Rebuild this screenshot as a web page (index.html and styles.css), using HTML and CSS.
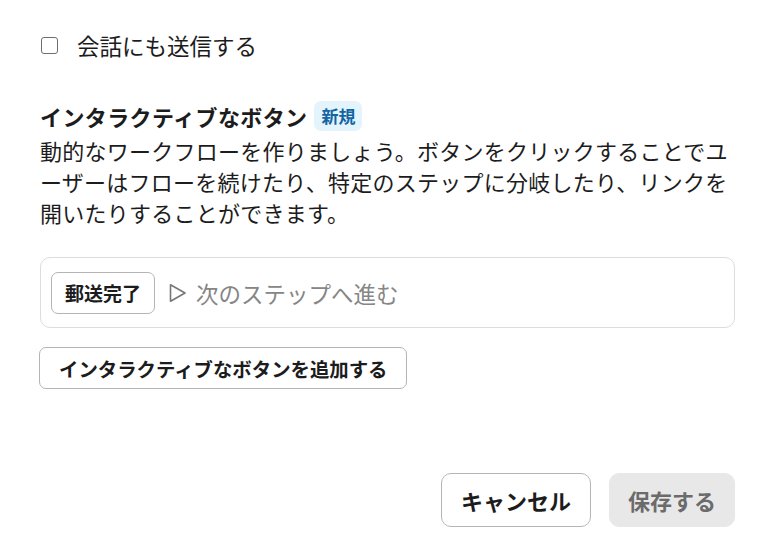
FILE: index.html
```html
<!DOCTYPE html>
<html lang="ja">
<head>
<meta charset="utf-8">
<link rel="stylesheet" href="styles.css">
</head>
<body>
<div class="page">
  <label class="check-row">
    <span class="checkbox"></span>
    <span class="check-label">会話にも送信する</span>
  </label>

  <section class="section">
    <div class="title-row">
      <h2 class="title">インタラクティブなボタン</h2>
      <span class="badge">新規</span>
    </div>
    <p class="desc">動的なワークフローを作りましょう。ボタンをクリックすることでユーザーはフローを続けたり、特定のステップに分岐したり、リンクを開いたりすることができます。</p>
  </section>

  <div class="preview">
    <span class="chip">郵送完了</span>
    <svg class="play" width="18" height="20" viewBox="0 0 18 20"><path d="M1.5 1.8 L16 10 L1.5 18.2 Z" fill="none" stroke="#777" stroke-width="1.6" stroke-linejoin="round"/></svg>
    <span class="next">次のステップへ進む</span>
  </div>

  <div class="add-row">
    <button class="add-btn">インタラクティブなボタンを追加する</button>
  </div>

  <div class="footer">
    <button class="btn cancel">キャンセル</button>
    <button class="btn save">保存する</button>
  </div>
</div>
</body>
</html>
```

FILE: styles.css
```css
* { box-sizing: border-box; }
html, body { margin: 0; padding: 0; background: #fff; }
body {
  font-family: "Noto Sans CJK JP", "Noto Sans", sans-serif;
  color: #1d1c1d;
  width: 775px;
  height: 534px;
  overflow: hidden;
}
.page {
  padding: 29px 40px 0 40px;
  display: flex;
  flex-direction: column;
}
.check-row {
  display: flex;
  align-items: center;
  gap: 19px;
  height: 32px;
}
.checkbox {
  width: 17px;
  height: 17px;
  border: 1.5px solid #6e6e6e;
  border-radius: 3px;
  margin-left: 1px;
  flex: none;
}
.check-label {
  font-size: 22.5px;
  line-height: 32px;
  margin-top: -1px;
}
.section { margin-top: 39px; }
.title-row {
  display: flex;
  align-items: center;
  gap: 7px;
  height: 32px;
}
.title {
  margin: 0;
  font-size: 22px;
  font-weight: 700;
  line-height: 32px;
  letter-spacing: 0.4px;
}
.badge {
  background: #e3f4fc;
  color: #1264a3;
  font-size: 17px;
  font-weight: 700;
  line-height: 30px;
  padding: 0 7px;
  border-radius: 7px;
}
.desc {
  margin: 0;
  font-size: 22px;
  letter-spacing: 0.25px;
  line-height: 31px;
  margin-top: 3px;
}
.preview {
  margin-top: 29px;
  height: 71px;
  border: 1px solid #dddddd;
  border-radius: 10px;
  display: flex;
  align-items: center;
  padding: 0 10px;
}
.chip {
  border: 1px solid #b5b5b5;
  border-radius: 7px;
  height: 42px;
  padding: 0 13px;
  display: flex;
  align-items: center;
  font-size: 19px;
  font-weight: 700;
}
.play { margin-left: 14px; flex: none; }
.next {
  margin-left: 9px;
  font-size: 22.5px;
  color: #868686;
}
.add-row { margin-top: 19px; display: flex; }
.add-btn {
  font-family: inherit;
  background: #fff;
  color: #1d1c1d;
  border: 1px solid #b5b5b5;
  border-radius: 7px;
  height: 42px;
  padding: 0 19px;
  font-size: 19.4px;
  font-weight: 700;
  margin-left: -1px;
}
.footer {
  margin-top: 84px;
  display: flex;
  justify-content: flex-end;
  gap: 18px;
}
.btn {
  font-family: inherit;
  height: 54px;
  border-radius: 10px;
  font-size: 22px;
  font-weight: 700;
}
.cancel {
  padding: 0 19px;
  background: #fff;
  border: 1px solid #b5b5b5;
  color: #1d1c1d;
}
.save {
  padding: 0 18px;
  background: #e8e8e8;
  border: 1px solid #e8e8e8;
  color: #6b6b6b;
}
```
